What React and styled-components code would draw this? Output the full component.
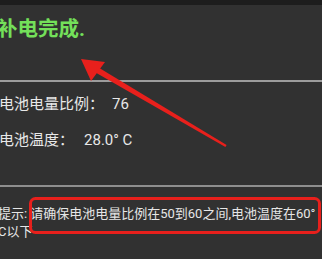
import React from "react";
import styled, { createGlobalStyle } from "styled-components";

const GlobalStyle = createGlobalStyle`
  html, body {
    margin: 0;
    padding: 0;
    background: #313131;
  }
  body {
    font-family: "Roboto", "Noto Sans CJK SC", sans-serif;
  }
`;

const Page = styled.div`
  position: relative;
  width: 322px;
  height: 259px;
  overflow: hidden;
  background: #313131;
  display: flex;
  flex-direction: column;
`;

const StatusStrip = styled.div`
  height: 5px;
  background: #1d1d1d;
  flex-shrink: 0;
`;

const TitleSection = styled.div`
  height: 75px;
  box-sizing: border-box;
  padding-top: 12px;
`;

const Title = styled.h1`
  margin: 0 0 0 -3px;
  font-size: 20.5px;
  line-height: 25px;
  font-weight: 700;
  color: #74e05a;
  white-space: nowrap;
`;

const Divider = styled.div`
  height: 2px;
  background: ${(p) => p.$color || "#9a9a9a"};
  flex-shrink: 0;
`;

const InfoSection = styled.div`
  display: flex;
  flex-direction: column;
  gap: 14px;
  padding: 11px 0 34px;
`;

const InfoRow = styled.div`
  display: flex;
  align-items: center;
  margin-left: -1px;
  font-size: 15px;
  line-height: 22px;
  color: #e8e8e8;
  white-space: nowrap;
`;

const Value = styled.span`
  margin-left: ${(p) => p.$gap}px;
`;

const TipSection = styled.div`
  padding-top: 18px;
  margin-left: -2px;
  font-size: 13px;
  line-height: 18px;
  color: #e6e6e6;
  white-space: nowrap;
`;

const TipLine = styled.div`
  display: flex;
`;

const TipText = styled.span`
  margin-left: 3px;
`;

const Overlay = styled.svg`
  position: absolute;
  left: 0;
  top: 0;
  pointer-events: none;
`;

export default function App() {
  return (
    <>
      <GlobalStyle />
      <Page>
        <StatusStrip />
        <TitleSection>
          <Title>补电完成.</Title>
        </TitleSection>
        <Divider $color="#9c9c9c" />
        <InfoSection>
          <InfoRow>
            电池电量比例：<Value $gap={8}>76</Value>
          </InfoRow>
          <InfoRow>
            电池温度：<Value $gap={10}>28.0° C</Value>
          </InfoRow>
        </InfoSection>
        <Divider $color="#8e8e8e" />
        <TipSection>
          <TipLine>
            提示:<TipText>请确保电池电量比例在50到60之间,电池温度在60°</TipText>
          </TipLine>
          <TipLine>C以下</TipLine>
        </TipSection>

        <Overlay width="322" height="259" viewBox="0 0 322 259">
          <polygon
            points="95.5,72.6 98.5,67.4 226.6,145 225.4,147"
            fill="#e8201c"
          />
          <polygon points="81,59 105,62 91,81" fill="#e8201c" />
          <rect
            x="30.5"
            y="198.5"
            width="289"
            height="34"
            rx="5"
            fill="none"
            stroke="#e8201c"
            strokeWidth="3"
          />
        </Overlay>
      </Page>
    </>
  );
}
